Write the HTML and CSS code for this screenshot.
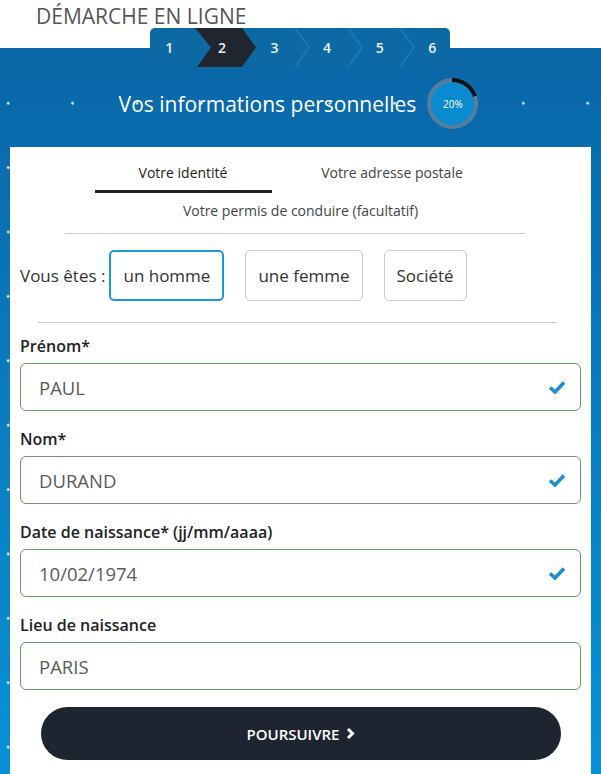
FILE: index.html
```html
<!DOCTYPE html>
<html lang="fr">

<head>
  <meta charset="UTF-8">
  <meta name="viewport" content="width=device-width, initial-scale=1.0">
  <title>Démarche en ligne</title>
  <link rel="stylesheet" href="styles.css">
</head>

<body>
  <header class="top">
    <h1 class="top-title">DÉMARCHE EN LIGNE</h1>
  </header>

  <div class="band">
    <div class="steps">
      <svg class="steps-bg" width="300" height="39" viewBox="0 0 300 39" aria-hidden="true">
        <polygon points="45,0 92,0 106,19.5 92,39 47,39 61,19.5" fill="#1f2630" />
        <polyline points="145,0 159,19.5 145,39" fill="none" stroke="#1679bb" stroke-width="2" />
        <polyline points="198,0 212,19.5 198,39" fill="none" stroke="#1679bb" stroke-width="2" />
        <polyline points="250,0 264,19.5 250,39" fill="none" stroke="#1679bb" stroke-width="2" />
      </svg>
      <span class="step">1</span>
      <span class="step">2</span>
      <span class="step">3</span>
      <span class="step">4</span>
      <span class="step">5</span>
      <span class="step">6</span>
    </div>

    <div class="heading">
      <h2 class="heading-title">Vos informations personnelles</h2>
      <div class="progress">
        <div class="progress-inner">20%</div>
      </div>
    </div>

    <main class="card">
      <nav class="tabs">
        <div class="tabs-row">
          <span class="tab active">Votre identité</span>
          <span class="tab">Votre adresse postale</span>
        </div>
        <span class="tab-wide">Votre permis de conduire (facultatif)</span>
      </nav>
      <hr class="sep sep-short">

      <div class="gender">
        <span class="gender-label">Vous êtes :</span>
        <button type="button" class="choice selected">un homme</button>
        <button type="button" class="choice">une femme</button>
        <button type="button" class="choice">Société</button>
      </div>
      <hr class="sep sep-long">

      <form class="fields">
        <label for="prenom">Prénom*</label>
        <div class="field">
          <input type="text" id="prenom" value="PAUL">
          <svg class="check" width="18" height="14" viewBox="0 0 18 14"><polyline points="2,7.5 7,12 16,2.5" /></svg>
        </div>

        <label for="nom">Nom*</label>
        <div class="field">
          <input type="text" id="nom" value="DURAND">
          <svg class="check" width="18" height="14" viewBox="0 0 18 14"><polyline points="2,7.5 7,12 16,2.5" /></svg>
        </div>

        <label for="naissance">Date de naissance* (jj/mm/aaaa)</label>
        <div class="field">
          <input type="text" id="naissance" value="10/02/1974">
          <svg class="check" width="18" height="14" viewBox="0 0 18 14"><polyline points="2,7.5 7,12 16,2.5" /></svg>
        </div>

        <label for="lieu">Lieu de naissance</label>
        <div class="field">
          <input type="text" id="lieu" value="PARIS">
        </div>

        <button type="button" class="next">
          POURSUIVRE
          <svg width="11" height="13" viewBox="0 0 11 13"><polyline points="3,2 7.5,6.5 3,11" /></svg>
        </button>
      </form>
    </main>
  </div>
</body>

</html>
```

FILE: styles.css
```css
body {
  margin: 0;
  font-family: "Open Sans", Arial, sans-serif;
  background-color: #fff;
  color: #333;
}

.top {
  height: 48px;
  padding-left: 36px;
}

.top-title {
  margin: 0;
  padding-top: 2px;
  font-size: 21px;
  font-weight: 400;
  color: #555;
  line-height: 28px;
}

.band {
  display: flow-root;
  min-height: 726px;
  background-color: #0a7cbf;
  background-image:
    radial-gradient(circle, rgba(255, 255, 255, 0.85) 1px, transparent 1.6px),
    linear-gradient(180deg, #0a66a7 0%, #0a7dc0 50%, #0792d5 100%);
  background-size: 64.4px 64.4px, 100% 100%;
  background-position: -24px 23px, 0 0;
}

.steps {
  position: relative;
  width: 300px;
  height: 39px;
  margin: -20px 0 0 150px;
  display: flex;
  background-color: #0c69a4;
  border-radius: 5px 5px 0 0;
}

.steps-bg {
  position: absolute;
  top: 0;
  left: 0;
}

.step {
  position: relative;
  flex: 0 0 52.6px;
  box-sizing: border-box;
  padding-right: 14px;
  text-align: center;
  line-height: 39px;
  font-size: 14px;
  font-weight: 600;
  color: #e8f0f6;
}

.heading {
  display: flex;
  justify-content: center;
  align-items: center;
  gap: 11px;
  margin-top: 11px;
  padding-right: 4px;
}

.heading-title {
  margin: 0;
  font-size: 21px;
  font-weight: 400;
  color: #fff;
}

.progress {
  width: 51px;
  height: 51px;
  padding: 4px;
  box-sizing: border-box;
  border-radius: 50%;
  background: conic-gradient(#111 0 20%, #557d9c 20% 100%);
}

.progress-inner {
  width: 100%;
  height: 100%;
  border-radius: 50%;
  background-color: #0a8bd0;
  color: #fff;
  font-size: 10px;
  display: flex;
  align-items: center;
  justify-content: center;
}

.card {
  margin: 18px 10px 0 10px;
  padding: 0 10px 30px;
  background-color: #fff;
  min-height: 608px;
}

.tabs {
  display: flex;
  flex-direction: column;
  align-items: center;
}

.tabs-row {
  display: flex;
  gap: 32px;
  padding-right: 26px;
}

.tab {
  width: 177px;
  padding: 16px 0 7px;
  text-align: center;
  font-size: 14px;
  line-height: 20px;
  color: #444;
  border-bottom: 3px solid transparent;
}

.tab.active {
  color: #222;
  border-bottom-color: #1f2227;
}

.tab-wide {
  margin-top: 8px;
  font-size: 14px;
  line-height: 20px;
  color: #444;
}

.sep {
  border: none;
  border-top: 1px solid #ccc;
  margin: 0;
}

.sep-short {
  width: 460px;
  margin: 12px 0 0 45px;
}

.sep-long {
  width: 519px;
  margin: 21px 0 0 18px;
}

.gender {
  display: flex;
  align-items: center;
  margin-top: 16px;
}

.gender-label {
  font-size: 17px;
  color: #333;
  margin-right: 4px;
}

.choice {
  height: 51px;
  padding: 0 12px;
  margin-right: 21px;
  font-family: inherit;
  font-size: 17px;
  color: #333;
  background-color: #fff;
  border: 1px solid #ccc;
  border-radius: 5px;
}

.choice.selected {
  border: 2px solid #1a9ad8;
  padding: 0 12px;
}

.fields {
  display: flex;
  flex-direction: column;
  padding-top: 8px;
}

label {
  font-size: 16px;
  font-weight: 600;
  line-height: 22px;
  color: #222;
  margin: 4px 0 6px;
}

.field {
  position: relative;
  margin-bottom: 13px;
}

.field input {
  width: 100%;
  height: 48px;
  box-sizing: border-box;
  padding: 0 18px;
  font-family: inherit;
  font-size: 18.5px;
  color: #5a5a5a;
  border: 1px solid #649a64;
  border-radius: 6px;
}

.check {
  position: absolute;
  right: 15px;
  top: 17px;
}

.check polyline {
  fill: none;
  stroke: #1a8fd8;
  stroke-width: 3.6;
}

.next {
  height: 53px;
  margin: 4px 20px 0 21px;
  border: none;
  border-radius: 27px;
  background-color: #1f2530;
  color: #fff;
  font-family: inherit;
  font-size: 15px;
  font-weight: 600;
  display: flex;
  align-items: center;
  justify-content: center;
  gap: 5px;
}

.next polyline {
  fill: none;
  stroke: #fff;
  stroke-width: 3;
}
```
